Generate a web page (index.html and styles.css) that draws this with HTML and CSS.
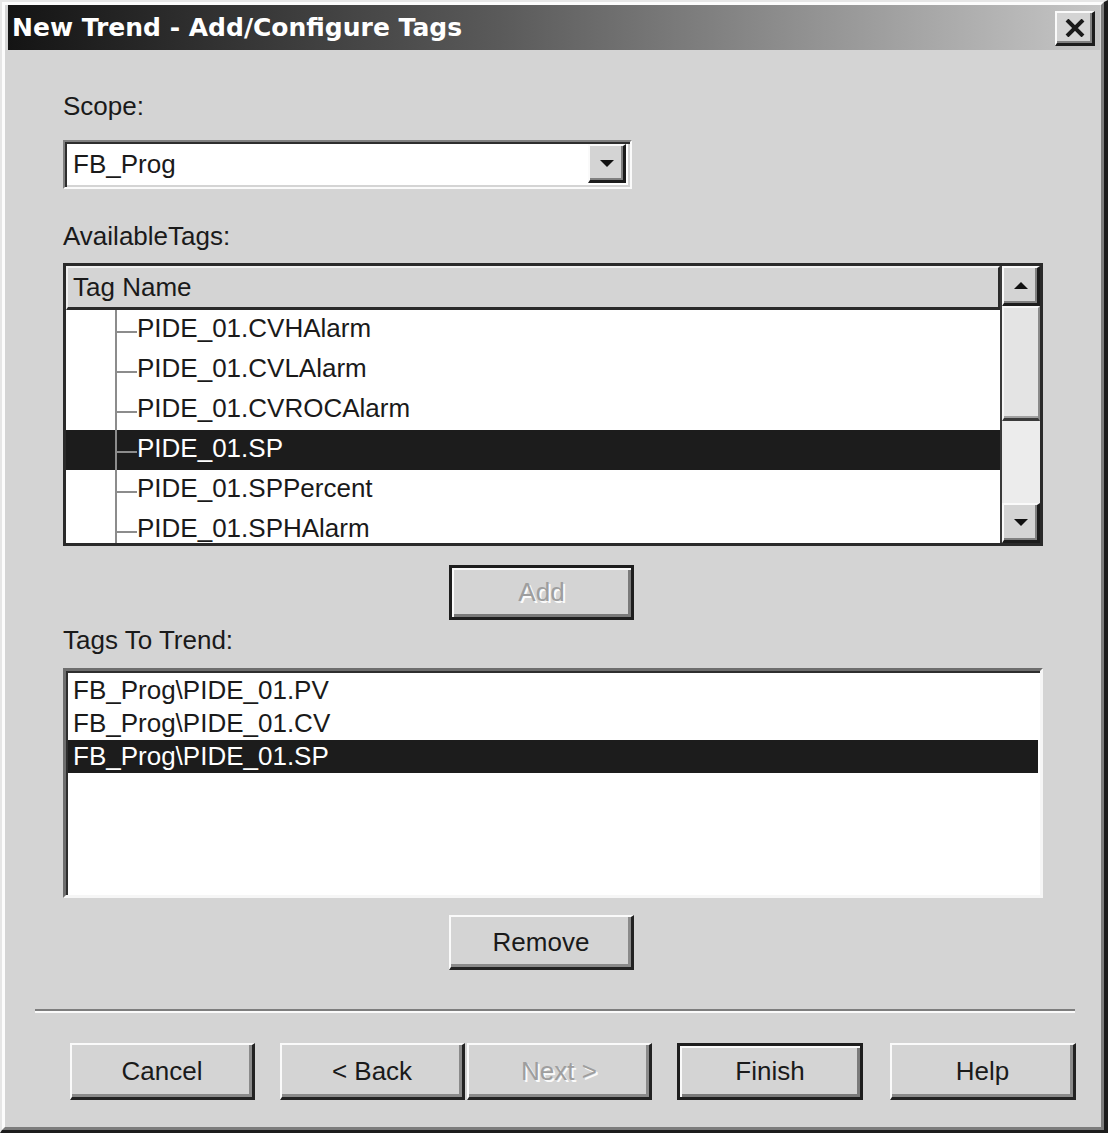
FILE: index.html
```html
<!DOCTYPE html>
<html>
<head>
<meta charset="utf-8">
<title>New Trend - Add/Configure Tags</title>
<link rel="stylesheet" href="styles.css">
</head>
<body>
<div class="window">
  <div class="frame">
    <div class="titlebar">
      <span class="title">New Trend - Add/Configure Tags</span>
      <div class="close">
        <svg width="20" height="18" viewBox="0 0 20 18"><path d="M2 1 L18 17 M18 1 L2 17" stroke="#1a1a1a" stroke-width="4" fill="none"/></svg>
      </div>
    </div>

    <div class="content">
      <div class="label label-scope">Scope:</div>
      <div class="combo">
        <div class="combo-text">FB_Prog</div>
        <div class="combo-btn">
          <svg width="16" height="9" viewBox="0 0 16 9"><path d="M1 1 H15 L8 8 Z" fill="#111"/></svg>
        </div>
      </div>

      <div class="label label-avail">AvailableTags:</div>
      <div class="tree">
        <div class="tree-main">
          <div class="tree-header">Tag Name</div>
          <div class="tree-rows">
            <div class="trow"><span class="branch"></span>PIDE_01.CVHAlarm</div>
            <div class="trow"><span class="branch"></span>PIDE_01.CVLAlarm</div>
            <div class="trow"><span class="branch"></span>PIDE_01.CVROCAlarm</div>
            <div class="trow selected"><span class="branch"></span>PIDE_01.SP</div>
            <div class="trow"><span class="branch"></span>PIDE_01.SPPercent</div>
            <div class="trow"><span class="branch"></span>PIDE_01.SPHAlarm</div>
          </div>
        </div>
        <div class="scrollbar">
          <div class="sb-btn">
            <svg width="16" height="9" viewBox="0 0 16 9"><path d="M1 8 H15 L8 1 Z" fill="#111"/></svg>
          </div>
          <div class="sb-thumb"></div>
          <div class="sb-track"></div>
          <div class="sb-btn">
            <svg width="16" height="9" viewBox="0 0 16 9"><path d="M1 1 H15 L8 8 Z" fill="#111"/></svg>
          </div>
        </div>
      </div>

      <div class="btn default disabled btn-add">Add</div>

      <div class="label label-trend">Tags To Trend:</div>
      <div class="trend">
        <div class="lrow">FB_Prog\PIDE_01.PV</div>
        <div class="lrow">FB_Prog\PIDE_01.CV</div>
        <div class="lrow selected">FB_Prog\PIDE_01.SP</div>
      </div>

      <div class="btn btn-remove">Remove</div>
    </div>

    <div class="separator"></div>

    <div class="footer">
      <div class="btn fbtn btn-cancel">Cancel</div>
      <div class="btn fbtn btn-back">&lt; Back</div>
      <div class="btn fbtn disabled btn-next">Next &gt;</div>
      <div class="btn fbtn default btn-finish">Finish</div>
      <div class="btn fbtn btn-help">Help</div>
    </div>
  </div>
</div>
</body>
</html>
```

FILE: styles.css
```css
* {
  box-sizing: border-box;
}

html, body {
  margin: 0;
  padding: 0;
}

body {
  width: 1108px;
  height: 1133px;
  overflow: hidden;
  background: #d4d4d4;
  font-family: "Liberation Sans", Arial, sans-serif;
  font-size: 26px;
  color: #1a1a1a;
}

.window {
  width: 1108px;
  height: 1133px;
  border-style: solid;
  border-width: 2px 4px 3px 2px;
  border-color: #e6e6e6 #1c1c1c #1c1c1c #e6e6e6;
  background: #d4d4d4;
}

.frame {
  height: 100%;
  border-style: solid;
  border-width: 3px;
  border-color: #fcfcfc #7c7c7c #7c7c7c #fcfcfc;
  padding: 0 1px 0 3px;
  display: flex;
  flex-direction: column;
}

/* Title bar */
.titlebar {
  height: 45px;
  flex: none;
  display: flex;
  align-items: center;
  justify-content: space-between;
  padding: 0 5px 0 4px;
  background: linear-gradient(to right, #141414 0%, #5a5a5a 45%, #c6c6c6 100%);
}

.title {
  font-family: "DejaVu Sans", Verdana, sans-serif;
  font-weight: bold;
  font-size: 25px;
  color: #ffffff;
  white-space: nowrap;
}

.close {
  width: 40px;
  height: 35px;
  margin-top: 2px;
  background: #d4d4d4;
  border-style: solid;
  border-width: 2px 3px 3px 2px;
  border-color: #fafafa #1c1c1c #1c1c1c #fafafa;
  box-shadow: inset -2px -2px 0 #808080;
  display: flex;
  align-items: center;
  justify-content: center;
}

/* Content */
.content {
  padding: 0 57px 0 55px;
  display: flex;
  flex-direction: column;
  align-items: flex-start;
}

.label {
  line-height: 30px;
  height: 30px;
  white-space: nowrap;
}

.label-scope {
  margin-top: 41px;
}

.label-avail {
  margin-top: 32px;
}

.label-trend {
  margin-top: 5px;
}

/* Combo box */
.combo {
  margin-top: 19px;
  width: 569px;
  height: 49px;
  display: flex;
  background: #ffffff;
  border-style: solid;
  border-width: 2px;
  border-color: #808080 #fafafa #fafafa #808080;
  box-shadow: inset 2px 2px 0 #2e2e2e, inset -2px -2px 0 #d4d4d4;
  padding: 2px 4px 4px 2px;
}

.combo-text {
  flex: 1;
  line-height: 41px;
  padding-left: 6px;
}

.combo-btn {
  width: 38px;
  flex: none;
  background: #d4d4d4;
  border-style: solid;
  border-width: 2px 3px 3px 2px;
  border-color: #fafafa #1c1c1c #1c1c1c #fafafa;
  box-shadow: inset -2px -2px 0 #808080;
  display: flex;
  align-items: center;
  justify-content: center;
}

/* Tree list */
.tree {
  margin-top: 12px;
  width: 980px;
  height: 283px;
  border: 3px solid #2a2a2a;
  display: flex;
  background: #ffffff;
}

.tree-main {
  flex: 1;
  display: flex;
  flex-direction: column;
  min-width: 0;
}

.tree-header {
  height: 44px;
  flex: none;
  background: #d4d4d4;
  border-style: solid;
  border-width: 2px 2px 3px 2px;
  border-color: #f0f0f0 #2a2a2a #2a2a2a #f0f0f0;
  line-height: 38px;
  padding-left: 5px;
}

.tree-rows {
  flex: 1;
  overflow: hidden;
  background: #ffffff;
}

.trow {
  height: 40px;
  display: flex;
  align-items: flex-start;
  line-height: 36px;
  white-space: nowrap;
}

.trow.selected {
  background: #1c1c1c;
  color: #ffffff;
}

.branch {
  flex: none;
  width: 22px;
  height: 40px;
  margin-left: 49px;
  background:
    linear-gradient(#8c8c8c, #8c8c8c) 0 0 / 2px 100% no-repeat,
    linear-gradient(#8c8c8c, #8c8c8c) 0 21px / 100% 2px no-repeat;
}

.scrollbar {
  width: 40px;
  flex: none;
  display: flex;
  flex-direction: column;
  background: #ebebeb;
  border-left: 2px solid #3a3a3a;
}

.sb-btn {
  height: 40px;
  flex: none;
  background: #d4d4d4;
  border-style: solid;
  border-width: 2px 3px 3px 2px;
  border-color: #fafafa #1c1c1c #1c1c1c #fafafa;
  box-shadow: inset -2px -2px 0 #808080;
  display: flex;
  align-items: center;
  justify-content: center;
}

.sb-thumb {
  height: 115px;
  flex: none;
  background: #e4e4e4;
  border-style: solid;
  border-width: 2px 2px 3px 2px;
  border-color: #f6f6f6 #8a8a8a #3a3a3a #f6f6f6;
  box-shadow: inset 0 -2px 0 #a0a0a0;
}

.sb-track {
  flex: 1;
  background: #ececec;
}

/* Buttons */
.btn {
  display: flex;
  align-items: center;
  justify-content: center;
  background: #d4d4d4;
  border-style: solid;
  border-width: 2px 3px 3px 2px;
  border-color: #fafafa #222222 #222222 #fafafa;
  box-shadow: inset -3px -3px 0 #8a8a8a;
  white-space: nowrap;
  color: #1a1a1a;
}

.btn.default {
  border-width: 3px;
  border-color: #1e1e1e;
  box-shadow: inset 2px 2px 0 #fafafa, inset -3px -3px 0 #7a7a7a;
}

.btn.disabled {
  color: #9e9e9e;
  text-shadow: 2px 2px 0 #fbfbfb;
}

.btn-add,
.btn-remove {
  width: 185px;
  height: 55px;
  margin-left: 386px;
}

.btn-add {
  margin-top: 19px;
}

.btn-remove {
  margin-top: 17px;
}

/* Tags to trend list */
.trend {
  margin-top: 13px;
  width: 980px;
  height: 230px;
  background: #ffffff;
  border-style: solid;
  border-width: 3px;
  border-color: #6e6e6e #f6f6f6 #f6f6f6 #6e6e6e;
  box-shadow: inset 2px 2px 0 #2e2e2e;
  padding: 3px 2px 0 2px;
}

.lrow {
  height: 33px;
  line-height: 33px;
  padding-left: 5px;
  white-space: nowrap;
}

.lrow.selected {
  background: #1c1c1c;
  color: #ffffff;
}

/* Separator */
.separator {
  margin-top: 39px;
  margin-left: 27px;
  width: 1040px;
  height: 4px;
  flex: none;
  border-top: 2px solid #7e7e7e;
  border-bottom: 2px solid #fafafa;
}

/* Footer */
.footer {
  margin-top: 30px;
  padding-left: 62px;
  display: flex;
  flex: none;
}

.fbtn {
  height: 57px;
  width: 185px;
}

.btn-back {
  margin-left: 25px;
}

.btn-next {
  margin-left: 2px;
}

.btn-finish {
  margin-left: 25px;
  width: 186px;
}

.btn-help {
  margin-left: 27px;
  width: 186px;
}
```
